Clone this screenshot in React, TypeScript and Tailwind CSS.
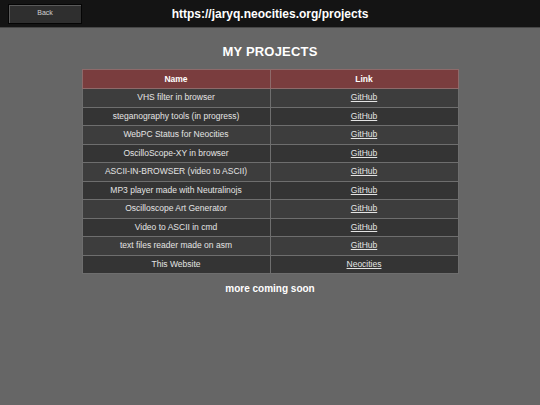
import React from "react";

const projects = [
  { name: "VHS filter in browser", link: "GitHub" },
  { name: "steganography tools (in progress)", link: "GitHub" },
  { name: "WebPC Status for Neocities", link: "GitHub" },
  { name: "OscilloScope-XY in browser", link: "GitHub" },
  { name: "ASCII-IN-BROWSER (video to ASCII)", link: "GitHub" },
  { name: "MP3 player made with Neutralinojs", link: "GitHub" },
  { name: "Oscilloscope Art Generator", link: "GitHub" },
  { name: "Video to ASCII in cmd", link: "GitHub" },
  { name: "text files reader made on asm", link: "GitHub" },
  { name: "This Website", link: "Neocities" },
];

export default function App() {
  return (
    <div className="min-h-screen bg-[#666666] font-['Liberation_Sans',Arial,sans-serif] text-white">
      {/* top bar */}
      <header className="grid h-[28px] grid-cols-[1fr_auto_1fr] items-center border-b border-[#474747] bg-[#141414]">
        <div className="pl-2">
          <button className="flex h-[20px] w-[74px] items-center justify-center border border-[#050505] bg-[#2f2f2f] text-[7px] text-[#d0d0d0] shadow-[inset_1px_1px_0_#5a5a5a]">
            Back
          </button>
        </div>
        <h2 className="text-[12px] font-bold leading-none text-white">
          https://jaryq.neocities.org/projects
        </h2>
        <div />
      </header>

      <main className="flex flex-col items-center">
        <h1 className="mt-[17px] text-[13px] font-bold leading-none tracking-[0.2px]">MY PROJECTS</h1>

        <table className="mt-[11px] w-[377px] table-fixed border-collapse border border-[#7a7a7a] text-[8.5px]">
          <thead>
            <tr className="h-[19px] bg-[#7a3d3e]">
              <th className="border border-[#8e6a6a] font-bold">Name</th>
              <th className="border border-[#8e6a6a] font-bold">Link</th>
            </tr>
          </thead>
          <tbody>
            {projects.map((p, i) => (
              <tr
                key={p.name}
                className={`h-[18.5px] ${i % 2 === 0 ? "bg-[#3d3d3d]" : "bg-[#343434]"}`}
              >
                <td className="border border-[#6e6e6e] text-center text-[#e4e4e4]">{p.name}</td>
                <td className="border border-[#6e6e6e] text-center">
                  <a href="#" className="text-[#e4e4e4] underline">
                    {p.link}
                  </a>
                </td>
              </tr>
            ))}
          </tbody>
        </table>

        <p className="mt-[10px] text-[10px] font-bold leading-none">more coming soon</p>
      </main>
    </div>
  );
}
